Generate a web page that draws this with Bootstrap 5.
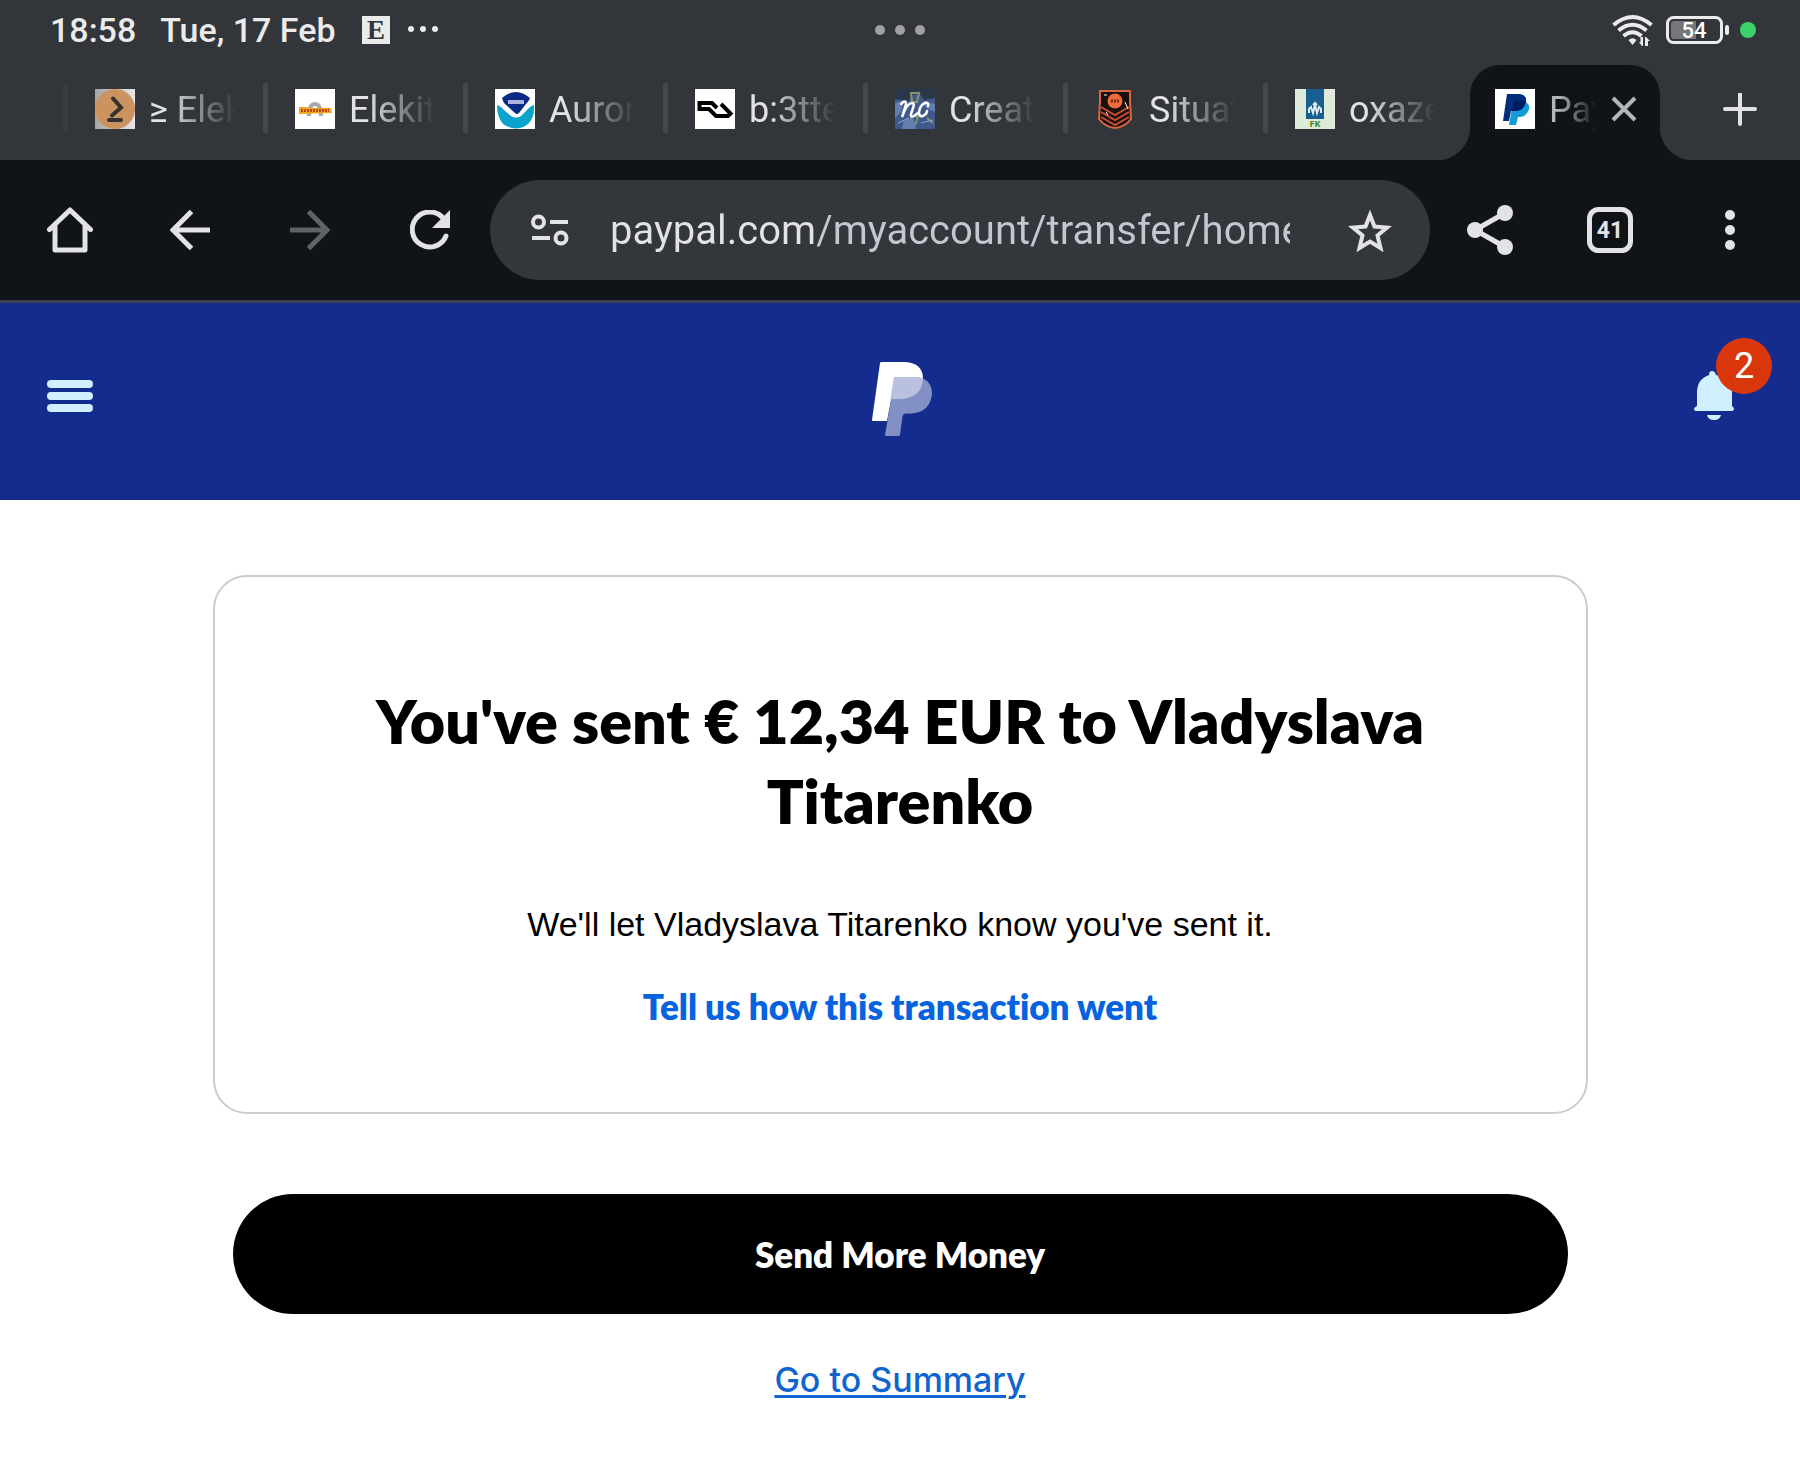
<!DOCTYPE html>
<html lang="en">
<head>
<meta charset="utf-8">
<meta name="viewport" content="width=device-width, initial-scale=1">
<title>PayPal: Send money</title>
<link href="https://cdn.jsdelivr.net/npm/bootstrap@5.3.0/dist/css/bootstrap.min.css" rel="stylesheet">
<style>
  :root { --strip: #323539; --bar: #101318; --ink: #e2e2e8; --pp: #142c8e; }
  body { font-family: Roboto, "Liberation Sans", sans-serif; background: #fff; color: #000; }
  svg { display: block; flex: none; }
  button { color: inherit; }
  .chrome-top { background: var(--strip); color: var(--ink); }
  .status { height: 60px; padding: 0 44px; font-size: 34px; line-height: 40px; font-weight: 500; color: #ebebeb; }
  .status-side { flex: 1 1 0; min-width: 0; }
  .clock { margin-left: 6px; }
  .date { margin-left: 24px; margin-right: 26px; }
  .tabs { height: 100px; padding-left: 63px; }
  .tab { flex: 0 1 200px; min-width: 0; height: 62px; gap: 14px; padding: 0 27px 0 32px; margin-top: 18px; color: var(--ink); text-decoration: none; font-size: 36px; line-height: 40px; position: relative; }
  .tab::before { content: ""; width: 5px; height: 50px; border-radius: 2px; background: #45484f; position: absolute; left: 0; top: 5px; }
  .tab:first-child::before { background: #393c41; }
  .tab-label { flex: 1 1 0; min-width: 0; padding-top: 2px; overflow: hidden; white-space: nowrap; -webkit-mask-image: linear-gradient(90deg, #000 20%, transparent 100%); mask-image: linear-gradient(90deg, #000 20%, transparent 100%); }
  .tab-on { flex: 0 0 190px; min-width: 0; height: 95px; margin: 5px 0 0 7px; padding: 0 22px 7px 25px; background: var(--bar); border-radius: 30px 30px 0 0; color: #b4b5b9; font-size: 36px; line-height: 40px; gap: 14px; position: relative; }
  .tab-on::before, .tab-on::after { content: ""; position: absolute; bottom: 0; width: 34px; height: 34px; }
  .tab-on::before { right: 100%; background: radial-gradient(circle at 0 0, transparent 34px, var(--bar) 35px); }
  .tab-on::after { left: 100%; background: radial-gradient(circle at 100% 0, transparent 34px, var(--bar) 35px); }
  .tool { flex: 0 0 120px; height: 120px; padding: 0; border: 0; background: none; }
  .tool:disabled { color: #606267; }
  .toolbar { background: var(--bar); color: var(--ink); height: 143px; padding: 0 10px; border-bottom: 3px solid #3c4250; }
  .omni { background: #33363b; height: 100px; padding: 0 38px 0 40px; }
  .star { color: var(--ink); }
  .url { margin: 0 58px 0 40px; font-size: 40px; line-height: 50px; height: 60px; padding: 0; border: 0; border-radius: 0; color: #c4c6d0; background: linear-gradient(90deg, var(--ink) 207px, #c4c6d0 207px); -webkit-background-clip: text; background-clip: text; -webkit-text-fill-color: transparent; }
  .pp-head { background: var(--pp); height: 197px; padding: 0 64px 13px 47px; }
  .bell { position: relative; padding: 0; border: 0; background: none; }
  .bell-count { position: absolute; left: 24px; top: -30px; width: 56px; height: 56px; line-height: 56px; font-size: 36px; background: #d9360b; color: #fff; }
  .pp-main { max-width: 1375px; padding-top: 75px; padding-bottom: 80px; }
  .sent-box { border: 2px solid #ccc; border-radius: 34px; padding: 104px 140px 86px; }
  .plain { font-family: Lato, sans-serif; font-weight: 800; font-variant-ligatures: none; }
  .sent-title { font-size: 61px; line-height: 80px; margin-bottom: 63px; }
  .sent-note { font-family: "Liberation Sans", sans-serif; font-size: 34px; line-height: 40px; margin-bottom: 42px; }
  .feedback { font-size: 35px; line-height: 40px; color: #0663e0; text-decoration: none; }
  .act { padding: 0 20px; margin-top: 80px; }
  .send { height: 120px; font-size: 35px; line-height: 40px; background: #000; color: #fff; }
  .summary { font-family: Inter, sans-serif; font-weight: 500; font-size: 34px; line-height: 40px; margin-top: 46px; color: #1064d0; text-decoration-thickness: 3px; text-underline-offset: 3px; }
</style>
</head>
<body>
<header class="chrome-top">
  <div class="status d-flex align-items-center">
    <div class="status-side d-flex align-items-center">
      <span class="clock">18:58</span><span class="date">Tue, 17 Feb</span>
      <svg width="28" height="28" viewBox="0 0 28 28"><path fill="#ebebeb" d="M0 0h28v28H0z"/><text x="14" y="23" text-anchor="middle" font-family="Liberation Serif, serif" font-weight="700" font-size="27" fill="#323539">E</text></svg>
      <svg class="ms-3" width="34" height="8" viewBox="0 0 34 8" fill="#ebebeb"><circle cx="5" cy="3" r="3"/><circle cx="17" cy="3" r="3"/><circle cx="29" cy="3" r="3"/></svg>
    </div>
    <svg width="50" height="10" viewBox="0 0 50 10" fill="#a1a1a5"><circle cx="5" cy="5" r="5"/><circle cx="25" cy="5" r="5"/><circle cx="45" cy="5" r="5"/></svg>
    <div class="status-side d-flex align-items-center justify-content-end">
      <svg width="42" height="32" viewBox="0 0 42 32" fill="none" stroke="#ebebeb" stroke-width="4"><path d="M1.500 11Q20.500-5 39.500 11M6.500 16.500q14-11.500 28 0M11.500 22q9-7.500 18 0"/><path fill="#ebebeb" stroke="none" d="M16.500 26q4-3.500 8 0l-4 5zM28.500 23h2.500v9h-1l-3-4h1.500zM33 23h1l4 4h-2v5h-3z"/></svg>
      <svg class="ms-2 me-2" width="70" height="28" viewBox="-4 0 70 28"><rect x="1.500" y="1.500" width="54" height="25" rx="6" fill="none" stroke="#ebebeb" stroke-width="3"/><path fill="#74767a" d="M8 5h22v18H8a3 3 0 0 1-3-3V8a3 3 0 0 1 3-3z"/><rect x="59" y="9" width="4" height="10" rx="2" fill="#ebebeb"/><text x="28" y="22" text-anchor="middle" font-family="Roboto, sans-serif" font-weight="500" font-size="22" fill="#fff">54</text></svg>
      <svg width="16" height="16" viewBox="0 0 16 16"><circle cx="8" cy="8" r="8" fill="#3bd26b"/></svg>
    </div>
  </div>
  <nav class="tabs d-flex" aria-label="Open tabs">
    <a class="tab d-flex align-items-center" href="#"><svg width="40" height="40" viewBox="0 0 40 40"><defs><linearGradient id="fade"><stop stop-color="#a5a5a8"/><stop offset="1" stop-color="#e6e6e8"/></linearGradient></defs><path fill="url(#fade)" d="M0 0h40v40H0z"/><circle cx="20" cy="20" r="20" fill="#cb935f"/><path d="M18 9.500l8 9-9 8M14 31h12" fill="none" stroke="#34312e" stroke-width="4" stroke-linecap="round"/></svg><span class="tab-label">≥ Elek</span></a>
    <a class="tab d-flex align-items-center" href="#"><svg width="40" height="40" viewBox="0 0 40 40"><path fill="#fff" d="M0 0h40v40H0z"/><path d="M14 27q0-12 6-12t6 12" fill="none" stroke="#aaa" stroke-width="4"/><path d="M4 18h8l2 1h22l1 5-33 1z" fill="#f3a51b"/><path d="M6 21.500h28" stroke="#b84d12" stroke-width="3" stroke-dasharray="2 1"/></svg><span class="tab-label">Elekit</span></a>
    <a class="tab d-flex align-items-center" href="#"><svg width="40" height="40" viewBox="0 0 40 40"><path fill="#fff" d="M0 0h40v40H0z"/><path fill="#0b2a86" d="M7 9q14-12 28 0-1 3-4 6L24 24q-2 2-4 0L10 15Q8 13 7 9z"/><path fill="#0aa3cb" d="M2 16q4 1 7 5l7 6q5 3 10 0l6-6q3-4 7-5 1 12-6 19-12 9-25 0Q2 28 2 16z"/><path d="M13 13h16" stroke="#a9b5dc" stroke-width="4"/></svg><span class="tab-label">Auror</span></a>
    <a class="tab d-flex align-items-center" href="#"><svg width="40" height="40" viewBox="0 0 40 40"><path fill="#fff" d="M0 0h40v40H0z"/><path d="M22 19l-5-5H4.500v6H14l7 7h12l2.500-2.500L26 15" fill="none" stroke="#000" stroke-width="4"/></svg><span class="tab-label">b:3tte</span></a>
    <a class="tab d-flex align-items-center" href="#"><svg width="40" height="40" viewBox="0 0 40 40"><path fill="#40598c" d="M0 0h40v40H0z"/><path fill="#29384a" d="M0 0h40v9l-11 2-4-6-8 1-3 6-14-2z"/><path fill="#617eaf" d="M0 14l9-3-3 12-6 6zM28 12l12 3v8l-9-4zM9 31l9-3 3 12H7z"/><path d="M16 4h8l-2 9h-5zM18 26l5 2-3 8M32 29l6 5" fill="none" stroke="#8a9266" stroke-width="2"/><path d="M3 34l11-5M26 34l12-3" stroke="#8fa6ca"/><path d="M6 15q5-5 5 0L7 28q5-14 10-14 3 0 1 5l-2 6q-1 4 3 2l4-3M33 17q1-4-3-3-5 2-6 9 0 5 4 4 4-2 4-5" fill="none" stroke="#fff" stroke-width="2.500" stroke-linecap="round"/></svg><span class="tab-label">Creat</span></a>
    <a class="tab d-flex align-items-center" href="#"><svg width="40" height="40" viewBox="0 0 40 40"><path d="M5 2h30v10l1 18q-6 8-16 9Q10 38 4 30l1-18z" fill="#190f0d" stroke="#d9673f" stroke-width="2"/><path d="M6 18l14 8 14-8M6 23l14 8 14-8M6 28l14 8 14-8" fill="none" stroke="#c94f35" stroke-width="2"/><circle cx="20" cy="12" r="7.500" fill="#ee6b3c"/><path d="M16 12h8" stroke="#6d2b18" stroke-width="3" stroke-dasharray="2 1"/><path d="M30 13l3 7M9 6h3M11 23l2 3" stroke="#fff"/></svg><span class="tab-label">Situat</span></a>
    <a class="tab d-flex align-items-center" href="#"><svg width="40" height="40" viewBox="0 0 40 40"><path fill="#deebdb" d="M0 0h40v40H0z"/><path fill="#185f90" d="M11 0h18v30H11z"/><path d="M14 24v-4l2-2 2 6 2-8 2 8 2-6 2 2v4M18 16l2-2 2 2" fill="none" stroke="#dfeaf3" stroke-width="2"/><text x="20" y="38" text-anchor="middle" font-family="Open Sans, sans-serif" font-weight="700" font-size="9" fill="#39881d">FK</text></svg><span class="tab-label">oxaze</span></a>
    <div class="tab-on d-flex align-items-center">
      <svg width="40" height="40" viewBox="0 0 40 40"><path fill="#fff" d="M0 0h40v40H0z"/><path fill="#139ad8" d="M18 13h13q4 3 3 7-2 8-11 8l-2 8h-7z"/><path fill="#002c7c" d="M12 5h11q9 0 8 8-2 9-12 9h-3l-2 10H8z"/><path fill="#001c64" d="M19 12h11.500q-.5 10-11.500 10h-2z"/></svg>
      <span class="tab-label">Pay</span>
      <button class="btn p-0 border-0" type="button" aria-label="Close tab"><svg width="28" height="28" viewBox="0 0 28 28" fill="none" stroke="#b4b5b9" stroke-width="4"><path d="M3 3l22 22M25 3L3 25"/></svg></button>
    </div>
    <button class="tool d-flex align-items-center justify-content-center ms-auto h-100" type="button" aria-label="New tab"><svg width="34" height="34" viewBox="0 0 34 34" stroke="#e2e2e8" stroke-width="4" stroke-linecap="round"><path d="M17 1v30M2 16h30"/></svg></button>
  </nav>
</header>
<div class="toolbar d-flex align-items-center">
  <button class="tool d-flex align-items-center justify-content-center" type="button" aria-label="Home"><svg width="46" height="46" viewBox="0 0 46 46" fill="none" stroke="currentColor" stroke-width="5" stroke-linejoin="round" stroke-linecap="round"><path d="M2.500 22.500L23 3l20.500 19.500M8 19v24h30V19"/></svg></button>
  <button class="tool d-flex align-items-center justify-content-center" type="button" aria-label="Back"><svg width="40" height="40" viewBox="0 0 40 40" fill="none" stroke="currentColor" stroke-width="5"><path d="M40 20H4M21.500 1.500L3 20l18.500 18.500"/></svg></button>
  <button class="tool d-flex align-items-center justify-content-center" type="button" aria-label="Forward" disabled><svg width="40" height="40" viewBox="0 0 40 40" fill="none" stroke="currentColor" stroke-width="5"><path d="M0 20h36M18.500 1.500L37 20 18.500 38.500"/></svg></button>
  <button class="tool d-flex align-items-center justify-content-center" type="button" aria-label="Reload"><svg width="40" height="40" viewBox="0 0 40 40"><path d="M36 26A17.500 17.500 0 1 1 33 8" fill="none" stroke="currentColor" stroke-width="5" stroke-linecap="round"/><path fill="currentColor" d="M40 0v18H22z"/></svg></button>
  <div class="omni rounded-pill d-flex align-items-center flex-grow-1">
    <svg width="40" height="34" viewBox="0 0 40 34" fill="none" stroke="currentColor" stroke-width="4"><circle cx="8.500" cy="9" r="5.500"/><circle cx="31" cy="25" r="5.500"/><path d="M20 9h18M2 25h18"/></svg>
    <input class="url form-control shadow-none" type="text" aria-label="Address" value="paypal.com/myaccount/transfer/home">
    <button class="star btn p-0 border-0" type="button" aria-label="Bookmark"><svg width="44" height="44" viewBox="0 0 44 44" fill="none" stroke="currentColor" stroke-width="4"><path d="M22 7l4.500 11.500L39 19.500l-9.500 8 3 12.500L22 33.500 11.500 40l3-12.500-9.500-8 12.500-1z"/></svg></button>
  </div>
  <button class="tool d-flex align-items-center justify-content-center" type="button" aria-label="Share"><svg width="46" height="50" viewBox="0 0 46 50" fill="currentColor"><circle cx="8" cy="25" r="8"/><circle cx="38" cy="8" r="8"/><circle cx="38" cy="42" r="8"/><path d="M38 8L8 25l30 17" fill="none" stroke="currentColor" stroke-width="5"/></svg></button>
  <button class="tool d-flex align-items-center justify-content-center" type="button" aria-label="Switch tabs"><svg width="46" height="46" viewBox="0 0 46 46"><rect x="2.500" y="2.500" width="41" height="41" rx="9" fill="none" stroke="currentColor" stroke-width="5"/><text x="23" y="31" text-anchor="middle" font-family="Roboto, sans-serif" font-weight="700" font-size="23" fill="currentColor">41</text></svg></button>
  <button class="tool d-flex align-items-center justify-content-center" type="button" aria-label="Menu"><svg width="10" height="40" viewBox="0 0 10 40" fill="currentColor"><circle cx="5" cy="5" r="5"/><circle cx="5" cy="20" r="5"/><circle cx="5" cy="35" r="5"/></svg></button>
</div>
<header class="pp-head d-flex align-items-center justify-content-between">
  <button class="btn p-0 border-0" type="button" aria-label="Menu"><svg width="46" height="36" viewBox="0 0 46 36" fill="#d1efff"><rect y="3" width="46" height="8" rx="4"/><rect y="15" width="46" height="8" rx="4"/><rect y="27" width="46" height="8" rx="4"/></svg></button>
  <a href="#" aria-label="PayPal" class="ps-3"><svg width="64" height="78" viewBox="29 16 64 78" overflow="visible"><path fill="#fff" d="M42 22h23q18 1 18 17l-28 0-8 42H33q-1 0-1-1l8-57q0-1 2-1z"/><path fill="#8390c6" d="M55 37h20q17 1 17 17-2 18-20 19.500h-6q-3 0-3.500 3L60 95q0 1-2 1H46q-1 0-1-1z"/><path fill="#bac0df" d="M55 37h20q4 0 8 2-1 18-21 20H50.500l3-20q0-2 1.500-2z"/></svg></a>
  <button class="bell" type="button" aria-label="Notifications"><svg width="44" height="54" viewBox="42 48 44 54" fill="#d1f0ff"><path d="M62 51q3 0 4 4 16 3 16 18v13l2 2q0 3-2 3H46q-2 0-2-3l3-2V73q0-14 12-18 0-4 3-4zM57 95h14q-1 5-7 5t-7-5z"/></svg><span class="bell-count rounded-circle text-center">2</span></button>
</header>
<main class="pp-main container-fluid px-0">
  <section class="sent-box text-center">
    <h1 class="sent-title plain">You've sent € 12,34 EUR to Vladyslava Titarenko</h1>
    <p class="sent-note">We'll let Vladyslava Titarenko know you've sent it.</p>
    <a class="feedback plain d-block" href="#">Tell us how this transaction went</a>
  </section>
  <div class="act d-flex flex-column align-items-center">
    <button class="send btn plain rounded-pill w-100" type="button">Send More Money</button>
    <a class="summary" href="#">Go to Summary</a>
  </div>
</main>
<script src="https://cdn.jsdelivr.net/npm/bootstrap@5.3.0/dist/js/bootstrap.bundle.min.js"></script>
</body>
</html>
